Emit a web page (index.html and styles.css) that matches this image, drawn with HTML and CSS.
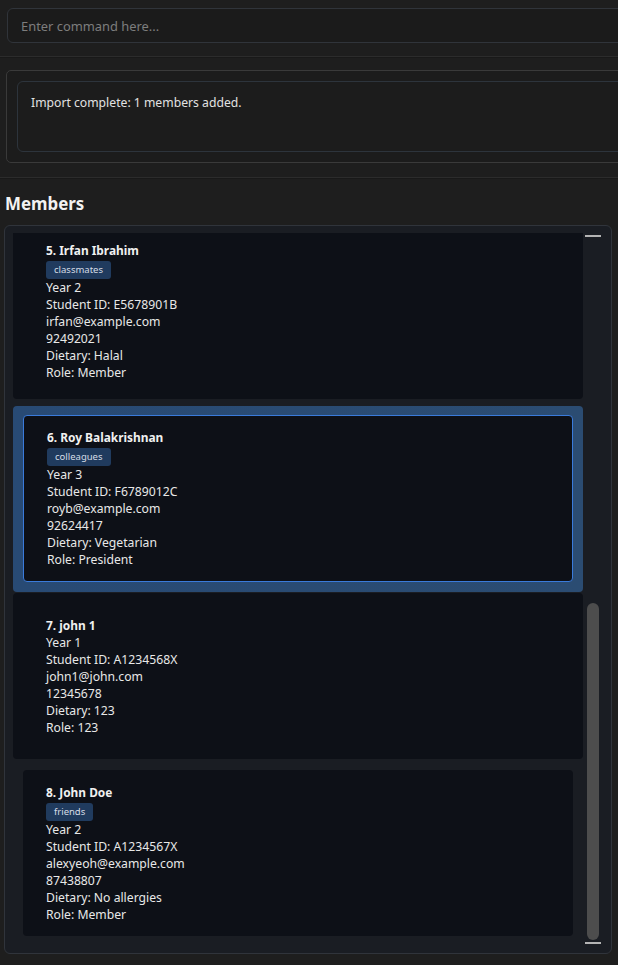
FILE: index.html
```html
<!DOCTYPE html>
<html>
<head>
<meta charset="utf-8">
<link rel="stylesheet" href="styles.css">
</head>
<body>
<div class="app">
  <div class="command-bar">
    <div class="command-input">Enter command here...</div>
  </div>
  <div class="divider"></div>
  <div class="result-pane">
    <div class="result-outer">
      <div class="result-inner">Import complete: 1 members added.</div>
    </div>
  </div>
  <div class="divider"></div>
  <h2 class="list-title">Members</h2>
  <div class="list-panel">
    <div class="list-viewport">
      <div class="cell cell-plain cell-first">
        <div class="name">5. Irfan Ibrahim</div>
        <div class="tags"><span class="tag">classmates</span></div>
        <div class="line">Year 2</div>
        <div class="line">Student ID: E5678901B</div>
        <div class="line">irfan@example.com</div>
        <div class="line">92492021</div>
        <div class="line">Dietary: Halal</div>
        <div class="line">Role: Member</div>
      </div>
      <div class="cell-wrap selected">
        <div class="card card-selected">
          <div class="name">6. Roy Balakrishnan</div>
          <div class="tags"><span class="tag">colleagues</span></div>
          <div class="line">Year 3</div>
          <div class="line">Student ID: F6789012C</div>
          <div class="line">royb@example.com</div>
          <div class="line">92624417</div>
          <div class="line">Dietary: Vegetarian</div>
          <div class="line">Role: President</div>
        </div>
      </div>
      <div class="cell cell-plain cell-centered">
        <div class="name">7. john 1</div>
        <div class="line">Year 1</div>
        <div class="line">Student ID: A1234568X</div>
        <div class="line">john1@john.com</div>
        <div class="line">12345678</div>
        <div class="line">Dietary: 123</div>
        <div class="line">Role: 123</div>
      </div>
      <div class="cell-wrap">
        <div class="card">
          <div class="name">8. John Doe</div>
          <div class="tags"><span class="tag">friends</span></div>
          <div class="line">Year 2</div>
          <div class="line">Student ID: A1234567X</div>
          <div class="line">alexyeoh@example.com</div>
          <div class="line">87438807</div>
          <div class="line">Dietary: No allergies</div>
          <div class="line">Role: Member</div>
        </div>
      </div>
    </div>
    <div class="scrollbar">
      <div class="sb-arrow"></div>
      <div class="sb-track">
        <div class="sb-thumb"></div>
      </div>
      <div class="sb-arrow"></div>
    </div>
  </div>
</div>
</body>
</html>
```

FILE: styles.css
```css
html, body {
  margin: 0;
  padding: 0;
  background: #1e1e1e;
  width: 618px;
  height: 965px;
  overflow: hidden;
}

.app {
  font-family: "Noto Sans", "Open Sans", "Liberation Sans", sans-serif;
  color: #e6e6e6;
  display: flex;
  flex-direction: column;
}

.command-bar {
  padding: 8px 0 0 7px;
  height: 56px;
  box-sizing: border-box;
  overflow: hidden;
}

.command-input {
  width: 640px;
  height: 35px;
  box-sizing: border-box;
  border: 1px solid #30343a;
  border-radius: 6px;
  background: #1b1b1b;
  color: #7d7d7d;
  font-size: 12.9px;
  line-height: 34px;
  padding-left: 13px;
}

.divider {
  height: 1px;
  background: #2c2c2c;
  border-bottom: 1px solid #191919;
}

.result-pane {
  padding: 12px 0 14px 6px;
  overflow: hidden;
}

.result-outer {
  width: 650px;
  height: 93px;
  box-sizing: border-box;
  border: 1px solid #3a3a3a;
  border-radius: 5px;
  padding: 10px 0 10px 10px;
  background: #1c1c1c;
}

.result-inner {
  height: 71px;
  box-sizing: border-box;
  border: 1px solid #2d343c;
  border-radius: 6px;
  padding: 12px 0 0 13px;
  font-size: 12.2px;
  line-height: 17px;
  color: #e2e2e2;
}

.list-title {
  margin: 0;
  padding: 14px 0 0 5px;
  height: 46px;
  box-sizing: border-box;
  font-size: 16.9px;
  font-weight: 700;
  line-height: 22px;
  color: #f2f2f2;
}

.list-panel {
  margin-left: 4px;
  width: 608px;
  height: 729px;
  box-sizing: border-box;
  border: 1px solid #30343b;
  border-radius: 6px;
  background: #1a1d23;
  display: flex;
  overflow: hidden;
}

.list-viewport {
  flex: 0 0 570px;
  padding: 7px 0 0 8px;
  display: flex;
  flex-direction: column;
  overflow: hidden;
}

.cell,
.card {
  font-size: 12.2px;
  line-height: 17px;
  color: #e8e8e8;
}

.cell-plain {
  width: 570px;
  box-sizing: border-box;
  background: #0d1017;
  border-radius: 0 0 4px 4px;
  padding: 0 33px;
}

.cell-first {
  height: 166px;
  padding-top: 9px;
  flex: 0 0 auto;
}

.cell-centered {
  height: 166px;
  margin-top: 1px;
  display: flex;
  flex-direction: column;
  justify-content: center;
  border-radius: 4px;
  flex: 0 0 auto;
}

.cell-wrap {
  width: 570px;
  box-sizing: border-box;
  padding: 11px 10px 10px;
  flex: 0 0 auto;
}

.cell-wrap.selected {
  margin-top: 7px;
  padding: 9px 10px 10px;
  background: linear-gradient(90deg, #284a74, #2b4c72);
  border-radius: 4px;
}

.card {
  height: 166px;
  box-sizing: border-box;
  background: #0d1017;
  border-radius: 4px;
  padding: 14px 23px;
}

.card-selected {
  height: 167px;
  border: 1px solid #3a7bdb;
  padding: 13px 23px;
}

.name {
  font-weight: 700;
  font-size: 11.9px;
  color: #f0f0f0;
}

.tags {
  height: 20px;
  display: flex;
  align-items: flex-end;
}

.tag {
  display: inline-block;
  background: #203b5e;
  color: #d6dde6;
  font-size: 9.5px;
  line-height: 18px;
  height: 18px;
  padding: 0 8px;
  border-radius: 3px;
}

.scrollbar {
  flex: 0 0 28px;
  display: flex;
  flex-direction: column;
  padding: 9px 0 9px 2px;
  box-sizing: border-box;
}

.sb-arrow {
  width: 16px;
  height: 2px;
  background: #b4b4b4;
  flex: 0 0 2px;
}

.sb-track {
  flex: 1;
  display: flex;
  flex-direction: column;
  justify-content: flex-end;
  padding: 0 0 2px 2px;
}

.sb-thumb {
  width: 12px;
  height: 337px;
  border-radius: 6px;
  background: #4d4d4d;
}
```
